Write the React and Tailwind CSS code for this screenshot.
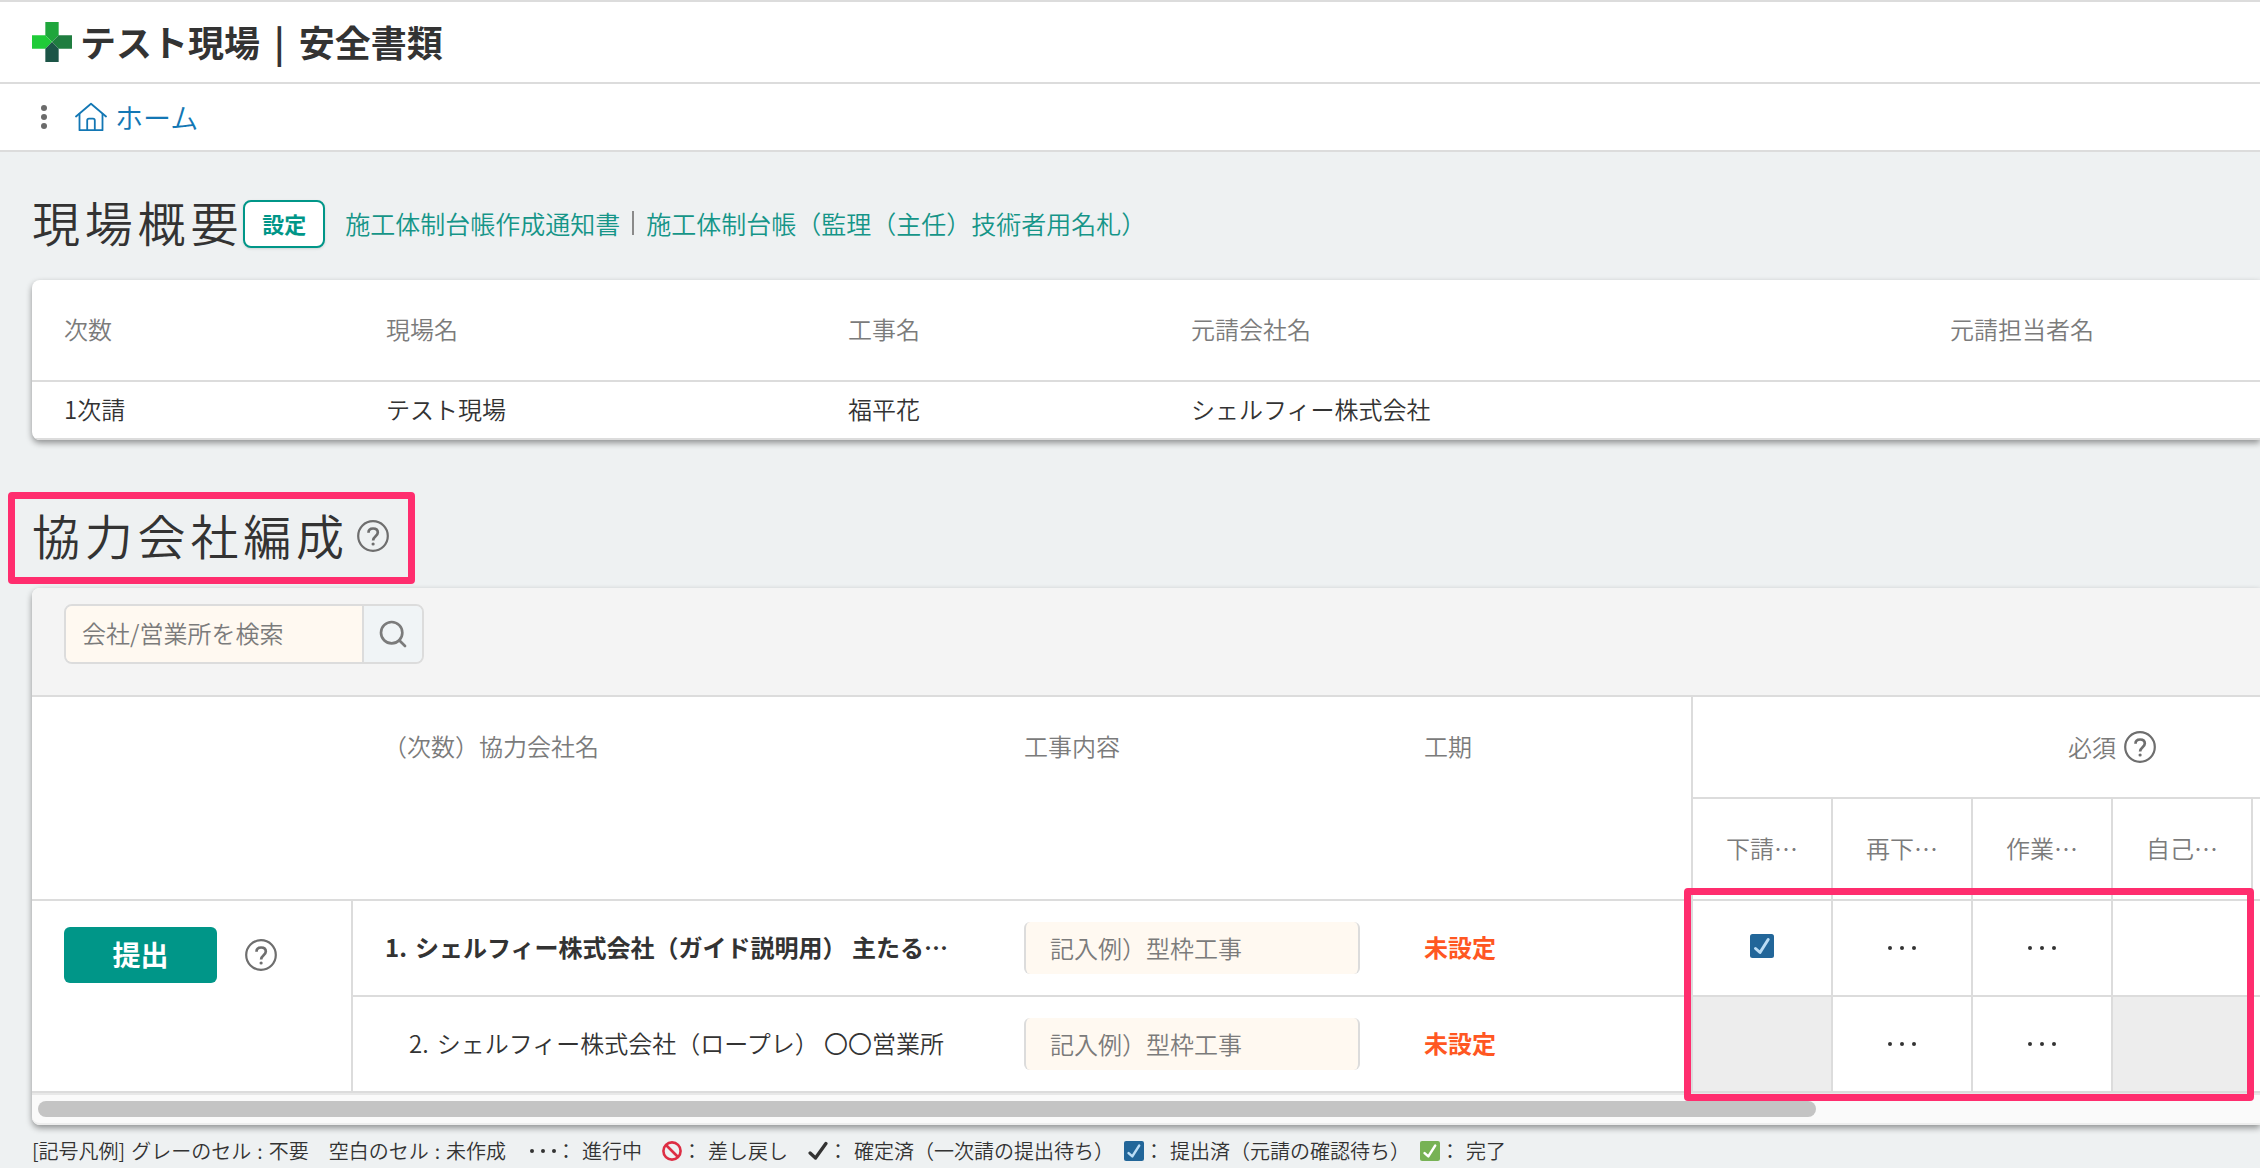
import { Search } from "lucide-react";

const line = "border-[#dcdcdc]";

function Logo() {
  return (
    <svg viewBox="0 0 39 39" className="size-10 shrink-0" aria-hidden="true">
      <path d="M13 0h13v13l-6.5 6.5L13 13z" fill="#1fa63c" />
      <path d="M0 13h13l6.5 6.5L13 26H0z" fill="#1fcb38" />
      <path d="M39 13H26l-6.5 6.5L26 26h13z" fill="#1f7d3f" />
      <path d="M13 39h13V26l-6.5-6.5L13 26z" fill="#1c5547" />
    </svg>
  );
}

function HomeIcon() {
  return (
    <svg viewBox="0 0 32 32" className="size-8" fill="none" stroke="currentColor" strokeWidth="1.8" strokeLinejoin="round" strokeLinecap="round" aria-hidden="true">
      <path d="M1 15.500 16 2.800l15 12.700" />
      <path d="M4.500 13v16.200h23V13" />
      <path d="M12.200 29V19.500q0-1.800 1.800-1.800h4q1.800 0 1.800 1.800V29" />
    </svg>
  );
}

function HelpIcon() {
  return (
    <button type="button" aria-label="ヘルプ" className="block size-8 shrink-0 text-[#6e6e6e]">
      <svg viewBox="0 0 32 32" className="size-8" fill="none" stroke="currentColor" aria-hidden="true">
        <circle cx="16" cy="16" r="14.8" strokeWidth="2.2" />
        <path d="M11.5 12.700c0-2.700 2-4.200 4.600-4.200 2.700 0 4.700 1.500 4.700 4 0 3.700-4.700 3.700-4.700 8" strokeWidth="2.700" />
        <circle cx="16.100" cy="24" r="1.600" fill="currentColor" stroke="none" />
      </svg>
    </button>
  );
}

function Tick() {
  return (
    <svg viewBox="0 0 24 24" className="size-5" fill="none" stroke="currentColor" strokeWidth="4" strokeLinecap="round" strokeLinejoin="round" aria-hidden="true">
      <path d="m2.500 14.500 6.500 6L21.500 3" />
    </svg>
  );
}

function Badge({ className }) {
  return (
    <svg viewBox="0 0 24 24" className={className} fill="none" aria-hidden="true">
      <rect width="24" height="24" rx="2.500" fill="currentColor" />
      <path d="m5.500 14.500 4.500 4L18.200 5.500" className="stroke-(--tick)" strokeWidth="3" strokeLinecap="round" strokeLinejoin="round" />
    </svg>
  );
}

function Forbidden() {
  return (
    <svg viewBox="0 0 20 20" className="size-5" fill="none" stroke="#dd2e44" strokeWidth="2.600" aria-hidden="true">
      <circle cx="10" cy="10" r="8.600" />
      <path d="m4 4 12 12" />
    </svg>
  );
}

function Dots({ className }) {
  return (
    <span className={`flex items-center justify-center ${className}`} role="img" aria-label="進行中">
      <i className="size-1 rounded-full bg-[#333]" />
      <i className="size-1 rounded-full bg-[#333]" />
      <i className="size-1 rounded-full bg-[#333]" />
    </span>
  );
}

function LegendItem({ icon, children }) {
  return (
    <span className="flex items-center">
      {icon}
      <span className="mr-1.5">：</span>
      {children}
    </span>
  );
}

const overview = [
  ["次数", "1次請", "w-[322px]"],
  ["現場名", "テスト現場", "w-[462px]"],
  ["工事名", "福平花", "w-[343px]"],
  ["元請会社名", "シェルフィー株式会社", "w-[759px]"],
  ["元請担当者名", "", ""],
];

const documents = ["下請…", "再下…", "作業…", "自己…", "", "", "", ""];

const companies = [
  { no: "1.", name: "シェルフィー株式会社（ガイド説明用） 主たる…", main: true, cells: ["submitted", "progress", "progress", "", "", "", "", ""] },
  { no: "2.", name: "シェルフィー株式会社（ロープレ） 〇〇営業所", main: false, cells: ["none", "progress", "progress", "none", "", "", "", ""] },
];

function CompanyCells({ company }) {
  return (
    <>
      <td className={`border-b-2 border-l-2 ${line} pr-8 pb-0.5 whitespace-nowrap ${company.main ? "pl-8 font-bold" : "pl-14"}`}>
        <span className="flex gap-2">
          <span>{company.no}</span>
          <span>{company.name}</span>
        </span>
      </td>
      <td className={`border-b-2 ${line} px-8`}>
        <input
          type="text"
          aria-label="工事内容"
          placeholder="記入例）型枠工事"
          className="block h-[52px] w-full rounded-md border-x-2 border-[#dcdcdc] bg-[#fff9f1] px-6 pb-0.5 placeholder:text-[#7b7b7b]"
        />
      </td>
      <td className={`border-b-2 ${line} px-8 pb-0.5 font-bold text-[#ff5722]`}>未設定</td>
      {company.cells.map((cell, i) => (
        <td key={i} className={`border-b-2 border-l-2 ${line} ${cell === "none" ? "bg-[#ededed]" : ""}`}>
          {cell === "submitted" && (
            <span role="img" aria-label="提出済" className="block pb-1">
              <Badge className="mx-auto size-6 text-[#226699] [--tick:#bbddf5]" />
            </span>
          )}
          {cell === "progress" && <Dots className="gap-2" />}
        </td>
      ))}
    </>
  );
}

export default function App() {
  return (
    <div lang="ja" className="min-h-screen overflow-hidden bg-[#eef1f2] font-['Noto_Sans_CJK_JP',sans-serif] text-2xl leading-9 font-[350] text-[#333]">
      <header className={`flex h-[84px] items-center gap-2 border-y-2 ${line} bg-white px-8`}>
        <Logo />
        <p className="flex gap-[14px] pb-0.5 text-4xl font-bold">
          <span>テスト現場</span>
          <span>|</span>
          <span>安全書類</span>
        </p>
      </header>
      <nav className={`flex h-[68px] items-center border-b-2 ${line} bg-white pl-[41px]`}>
        <button type="button" aria-label="メニュー" className="mr-7 flex flex-col gap-[3px]">
          <i className="size-1.5 rounded-full bg-[#6b6b6b]" />
          <i className="size-1.5 rounded-full bg-[#6b6b6b]" />
          <i className="size-1.5 rounded-full bg-[#6b6b6b]" />
        </button>
        <a href="#home" className="flex items-center gap-2 text-[28px] text-[#1377b4]">
          <HomeIcon />
          ホーム
        </a>
      </nav>

      <main className="pt-9 pl-8">
        <section>
          <div className="mb-5 flex h-[72px] items-center whitespace-nowrap">
            <h1 className="pb-1.5 text-5xl tracking-widest">現場概要</h1>
            <button type="button" className="mr-5 h-12 rounded-lg border-2 border-[#009688] bg-white px-[17px] pb-0.5 text-[22px] font-bold text-[#009688] shadow">
              設定
            </button>
            <div className="flex items-center gap-3 pb-0.5 text-[25px] text-[#159588]">
              <a href="#notice">施工体制台帳作成通知書</a>
              <span className="h-6 w-0.5 bg-[#8a8a8a]" />
              <a href="#ledger">施工体制台帳（監理（主任）技術者用名札）</a>
            </div>
          </div>
          <div className="overflow-hidden rounded-l-lg bg-white shadow-[0_3px_6px_rgba(0,0,0,0.4)]">
            <table className="w-full table-fixed border-separate border-spacing-0 text-left">
              <thead>
                <tr className="h-[102px] text-[#7b7b7b]">
                  {overview.map(([label, , width]) => (
                    <th key={label} scope="col" className={`border-b-2 ${line} pb-0.5 pl-8 font-[350] ${width}`}>{label}</th>
                  ))}
                </tr>
              </thead>
              <tbody>
                <tr className="h-[58px]">
                  {overview.map(([label, value]) => (
                    <td key={label} className={`border-b-2 ${line} pb-0.5 pl-8`}>{value}</td>
                  ))}
                </tr>
              </tbody>
            </table>
          </div>
        </section>

        <section className="mt-12">
          <div className="flex h-[100px] items-center">
            <div className="relative flex items-center gap-2 pb-1">
              <h2 className="pb-1 text-5xl tracking-widest">協力会社編成</h2>
              <HelpIcon />
              <span className="pointer-events-none absolute top-1/2 -right-[26px] -left-6 h-[92px] -translate-y-1/2 rounded border-[7px] border-[#ff2d6e]" />
            </div>
          </div>
          <div className="relative rounded-l-lg bg-white shadow-[0_3px_6px_rgba(0,0,0,0.4)]">
            <form className={`rounded-tl-lg border-b-2 ${line} bg-[#f4f4f4] px-8 pt-4 pb-[31px]`}>
              <div className={`flex h-[60px] w-[360px] overflow-hidden rounded-lg border-2 ${line}`}>
                <input type="search" aria-label="会社/営業所を検索" placeholder="会社/営業所を検索" className="min-w-0 flex-1 bg-[#fff9f1] px-4 pb-0.5 placeholder:text-[#7b7b7b]" />
                <button type="button" aria-label="検索" className={`flex w-[60px] items-center justify-center border-l-2 ${line} bg-[#f0f4f6] text-[#7b7b7b]`}>
                  <Search className="size-8" strokeWidth={2} />
                </button>
              </div>
            </form>
            <div className="overflow-hidden">
              <table className="w-[2779px] table-fixed border-separate border-spacing-0 text-left">
                <colgroup>
                  <col className="w-[319px]" />
                  <col className="w-[641px]" />
                  <col className="w-[400px]" />
                  <col className="w-[299px]" />
                  {documents.map((_, i) => (
                    <col key={i} className="w-[140px]" />
                  ))}
                </colgroup>
                <thead className="text-[#7b7b7b]">
                  <tr className="h-[102px]">
                    <td rowSpan={2} className={`border-b-2 ${line}`} />
                    <th rowSpan={2} scope="col" className={`border-b-2 ${line} px-8 pt-[31px] align-top font-[350]`}>（次数）協力会社名</th>
                    <th rowSpan={2} scope="col" className={`border-b-2 ${line} px-8 pt-[31px] align-top font-[350]`}>工事内容</th>
                    <th rowSpan={2} scope="col" className={`border-b-2 ${line} px-8 pt-[31px] align-top font-[350]`}>工期</th>
                    <th colSpan={6} scope="colgroup" className={`border-b-2 border-l-2 ${line} font-[350]`}>
                      <div className="flex items-center justify-center gap-2">
                        必須
                        <HelpIcon />
                      </div>
                    </th>
                    <th colSpan={2} className={`border-b-2 border-l-2 ${line}`} />
                  </tr>
                  <tr className="h-[102px]">
                    {documents.map((name, i) => (
                      <th key={i} scope="col" className={`border-b-2 border-l-2 ${line} pb-0.5 text-center font-[350]`}>{name}</th>
                    ))}
                  </tr>
                </thead>
                <tbody>
                  <tr className="h-24">
                    <td rowSpan={2} className={`border-b-2 ${line} px-8 pt-[26px] align-top`}>
                      <div className="flex items-center gap-7">
                        <button type="button" className="h-14 w-[153px] rounded-md bg-[#009688] pb-0.5 text-[28px] font-bold text-white">提出</button>
                        <HelpIcon />
                      </div>
                    </td>
                    <CompanyCells company={companies[0]} />
                  </tr>
                  <tr className="h-24">
                    <CompanyCells company={companies[1]} />
                  </tr>
                </tbody>
              </table>
            </div>
            <div className="rounded-bl-lg border-t-2 border-b-2 border-t-[#e8e8e8] border-b-[#ededed] bg-[#fafafa] py-1.5 pl-1.5">
              <div className="h-4 w-4/5 rounded-full bg-[#c4c4c4]" />
            </div>
            <span className="pointer-events-none absolute top-[300px] left-[1652px] h-[213px] w-[570px] rounded border-[7px] border-[#ff2d6e]" />
          </div>
        </section>

        <footer className="mt-[10px] flex items-center gap-5 text-xl leading-8 whitespace-nowrap">
          <span className="flex gap-1.5">
            <span>[記号凡例]</span>
            <span>グレーのセル</span>
            <span>:</span>
            <span>不要</span>
          </span>
          <span className="flex gap-1.5">
            <span>空白のセル</span>
            <span>:</span>
            <span>未作成</span>
          </span>
          <LegendItem icon={<Dots className="gap-[7px] pl-1" />}>進行中</LegendItem>
          <LegendItem icon={<Forbidden />}>差し戻し</LegendItem>
          <span className="flex items-center gap-2.5">
            <LegendItem icon={<Tick />}>確定済（一次請の提出待ち）</LegendItem>
            <LegendItem icon={<Badge className="size-5 text-[#226699] [--tick:#bbddf5]" />}>提出済（元請の確認待ち）</LegendItem>
            <LegendItem icon={<Badge className="size-5 text-[#77b255] [--tick:#ffffff]" />}>完了</LegendItem>
          </span>
        </footer>
      </main>
    </div>
  );
}
